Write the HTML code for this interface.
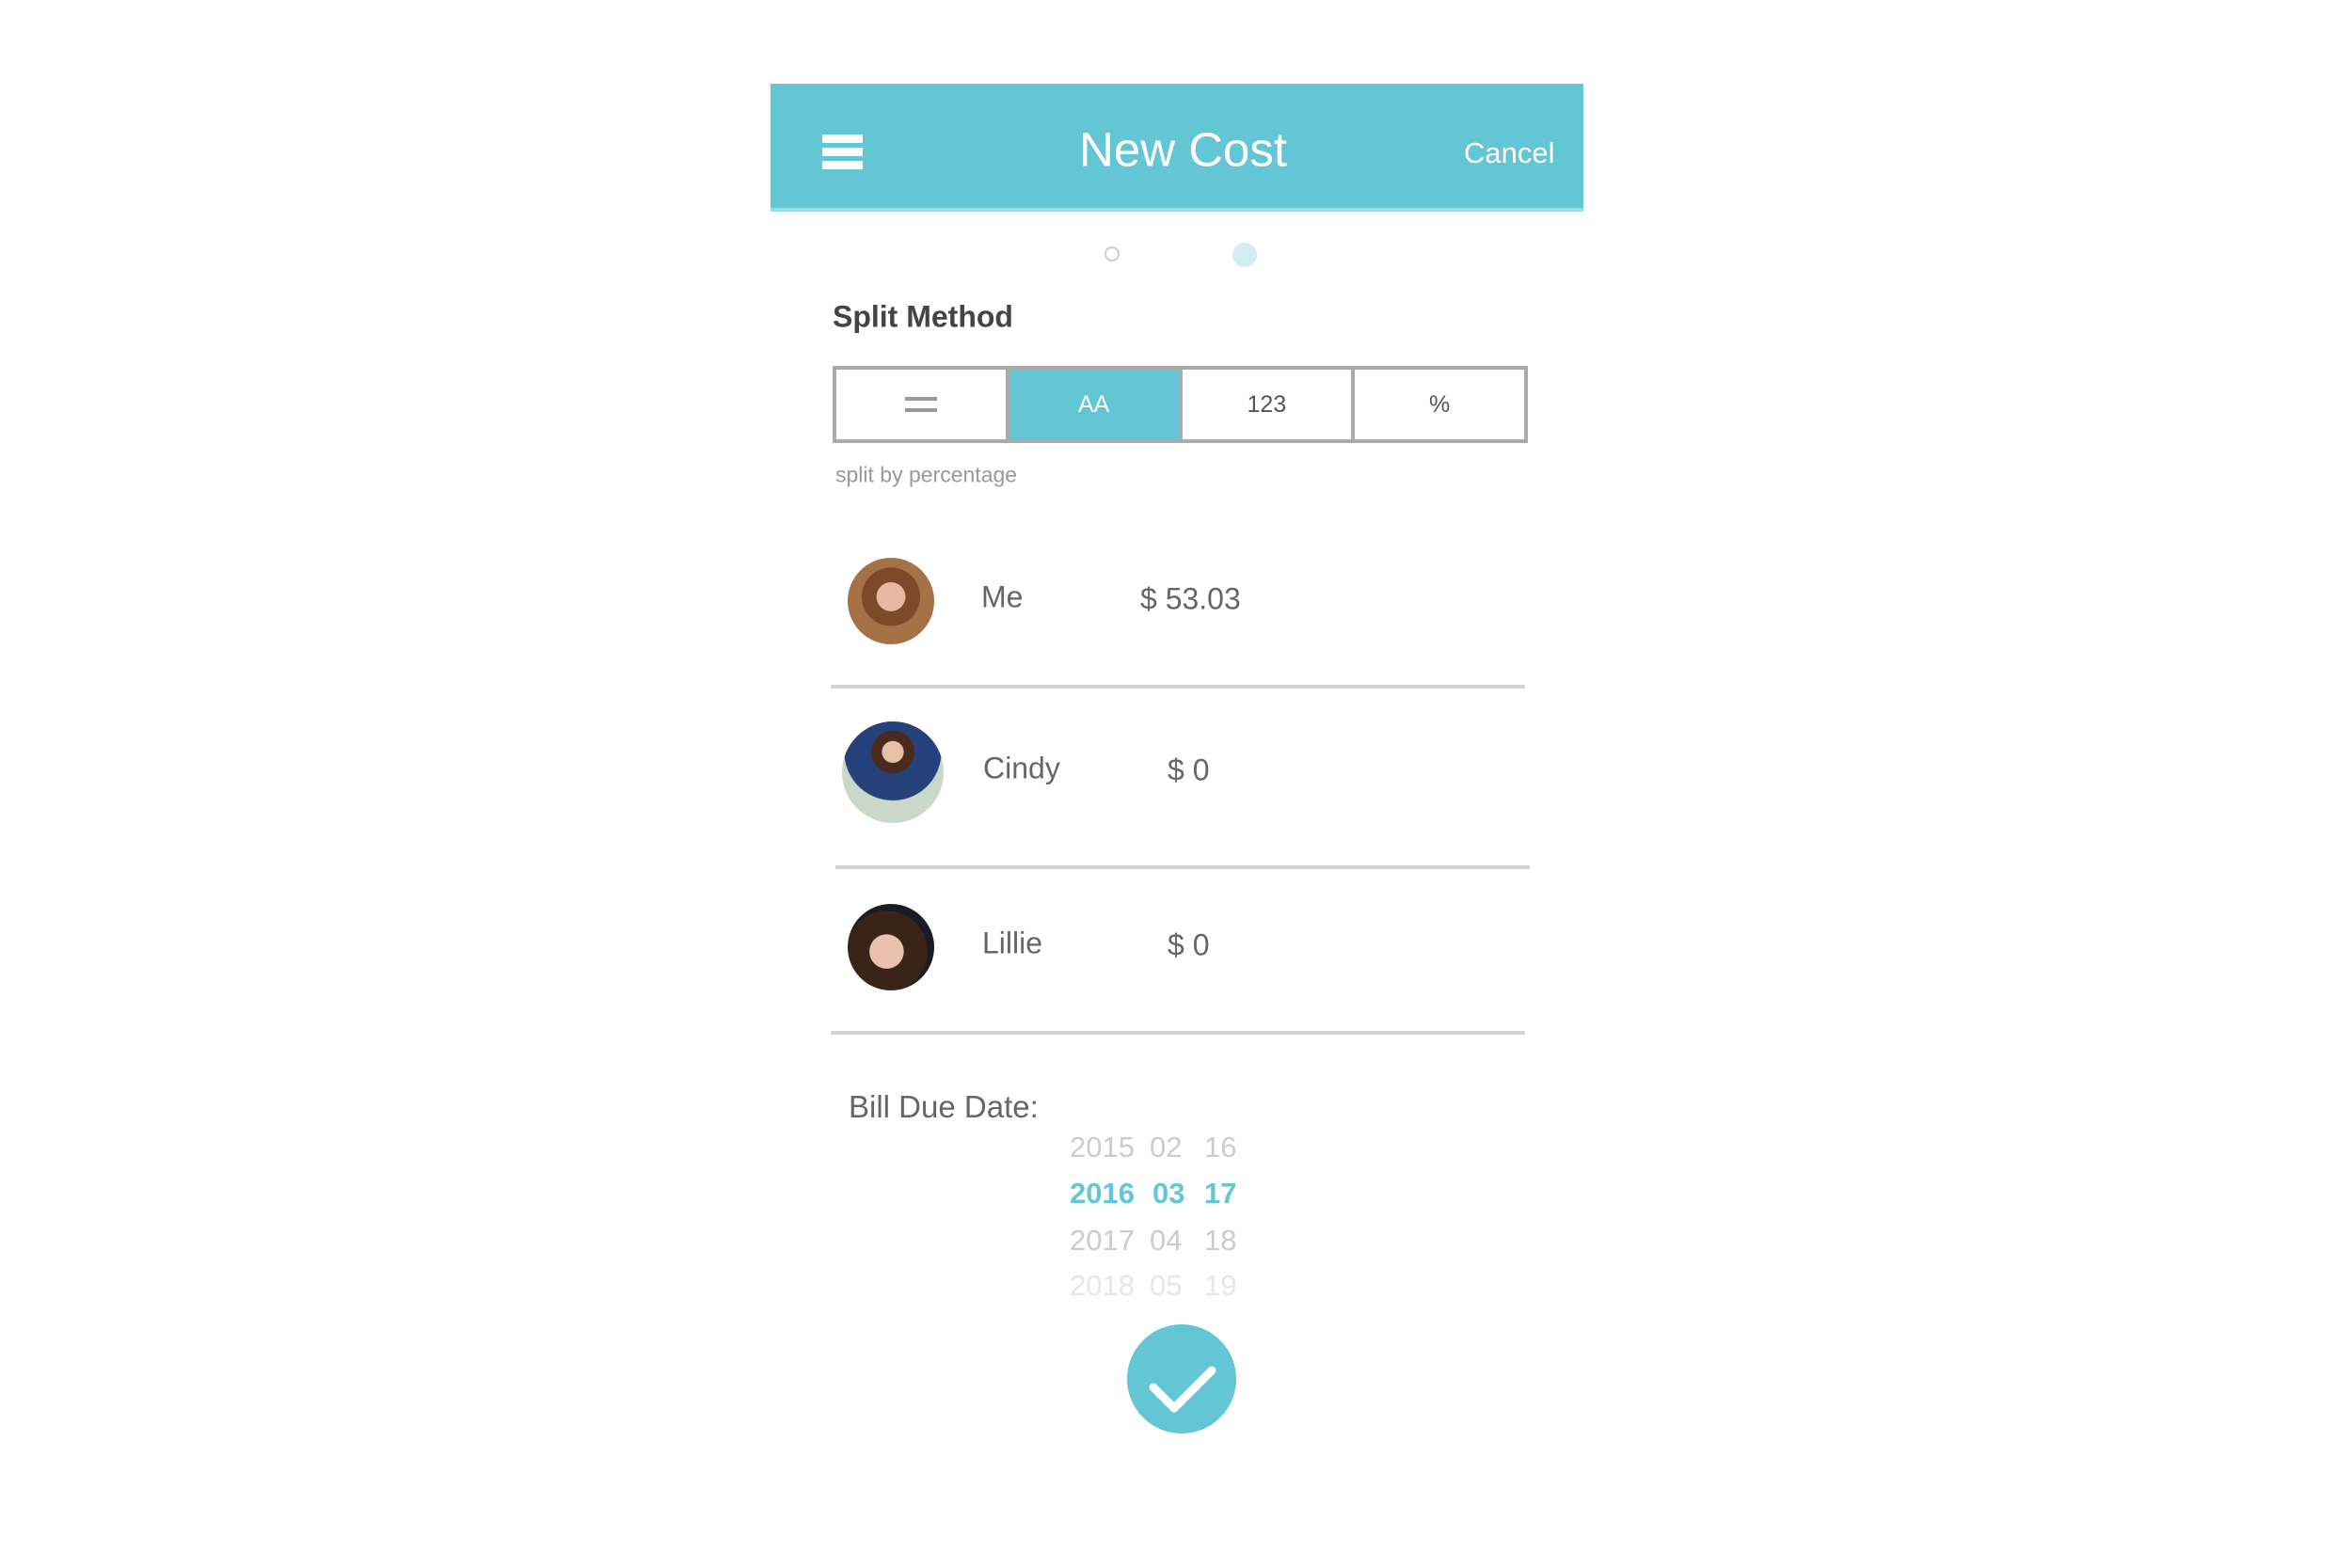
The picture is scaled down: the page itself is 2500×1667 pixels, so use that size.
<!DOCTYPE html>
<html><head><meta charset="utf-8"><style>
body{margin:0;width:2500px;height:1667px;background:#fff;position:relative;overflow:hidden;font-family:"Liberation Sans",sans-serif;}
#w{position:absolute;left:0;top:0;width:2500px;height:1667px;transform:translate(-3px,-1px);}
.a{position:absolute;white-space:nowrap;}
.c{position:absolute;transform:translateY(-50%);white-space:nowrap;}
.hdr{left:822px;top:90px;width:864px;height:136px;background:#62c6d4;border-bottom:4px solid #9adbe6;box-sizing:border-box;}
.bar{position:absolute;left:877px;width:43px;height:9px;background:#fff;}
.seg{left:888px;top:390px;width:739px;height:82px;border:4px solid #aaa;box-sizing:border-box;display:flex;}
.seg div{flex:1;display:flex;align-items:center;justify-content:center;font-size:25px;color:#555;border-right:4px solid #aaa;}
.seg div:last-child{border-right:none;}
.line{position:absolute;height:4px;background:#d2d2d2;}
.name{font-size:32px;color:#666;}
.d{font-size:31px;color:#ccc;}
</style></head><body><div id="w">
<div class="a hdr"></div>
<div class="bar" style="top:144px"></div><div class="bar" style="top:158px"></div><div class="bar" style="top:172px"></div>
<div class="c" style="left:1150px;top:160px;font-size:51px;color:#fff;">New Cost</div>
<div class="c" style="left:1559px;top:164px;font-size:31px;color:#fff;">Cancel</div>
<div class="a" style="left:1177px;top:263px;width:16px;height:16px;border:2px solid #ccc;border-radius:50%;box-sizing:border-box;"></div>
<div class="a" style="left:1313px;top:259px;width:26px;height:26px;background:#d3eef3;border-radius:50%;"></div>
<div class="c" style="left:888px;top:338px;font-size:32px;font-weight:bold;color:#444;">Split Method</div>
<div class="a seg"><div><span style="display:block;width:34px;height:16px;border-top:4px solid #999;border-bottom:4px solid #999;box-sizing:border-box;"></span></div><div style="background:#62c6d4;color:#fff;">AA</div><div>123</div><div>%</div></div>
<div class="c" style="left:891px;top:506px;font-size:23px;color:#999;">split by percentage</div>

<div class="a" style="left:904px;top:594px;width:92px;height:92px;border-radius:50%;background:radial-gradient(circle at 50% 45%,#e8b9a0 0 22%,#7a4a2a 23% 45%,#a57248 46%);"></div>
<div class="c name" style="left:1046px;top:636px;">Me</div>
<div class="c name" style="left:1215px;top:638px;">$ 53.03</div>
<div class="line" style="left:886px;top:729px;width:738px;"></div>

<div class="a" style="left:898px;top:768px;width:108px;height:108px;border-radius:50%;background:radial-gradient(circle at 50% 30%,#e7c0a8 0 12%,#4a2a1e 13% 24%,#24417a 25% 55%,#c9d8c8 56%);"></div>
<div class="c name" style="left:1048px;top:818px;">Cindy</div>
<div class="c name" style="left:1244px;top:820px;">$ 0</div>
<div class="line" style="left:891px;top:921px;width:738px;"></div>

<div class="a" style="left:904px;top:962px;width:92px;height:92px;border-radius:50%;background:radial-gradient(circle at 45% 55%,#eac1ad 0 25%,#3a2418 26% 60%,#1b1b22 61%);"></div>
<div class="c name" style="left:1047px;top:1004px;">Lillie</div>
<div class="c name" style="left:1244px;top:1006px;">$ 0</div>
<div class="line" style="left:886px;top:1097px;width:738px;"></div>

<div class="c" style="left:905px;top:1178px;font-size:33px;color:#666;">Bill Due Date:</div>
<div class="c d" style="left:1140px;top:1221px;">2015</div><div class="c d" style="left:1225px;top:1221px;">02</div><div class="c d" style="left:1283px;top:1221px;">16</div>
<div class="c d" style="left:1140px;top:1270px;color:#62c6d4;font-weight:bold;">2016</div><div class="c d" style="left:1228px;top:1270px;color:#62c6d4;font-weight:bold;">03</div><div class="c d" style="left:1283px;top:1270px;color:#62c6d4;font-weight:bold;">17</div>
<div class="c d" style="left:1140px;top:1320px;">2017</div><div class="c d" style="left:1225px;top:1320px;">04</div><div class="c d" style="left:1283px;top:1320px;">18</div>
<div class="c d" style="left:1140px;top:1368px;color:#e6e6e6;">2018</div><div class="c d" style="left:1225px;top:1368px;color:#e6e6e6;">05</div><div class="c d" style="left:1283px;top:1368px;color:#e6e6e6;">19</div>

<svg class="a" style="left:1201px;top:1409px" width="116" height="116" viewBox="0 0 116 116"><circle cx="58" cy="58" r="58" fill="#62c6d4"/><path d="M28 67 L50 89 L90 49" fill="none" stroke="#fff" stroke-width="9" stroke-linecap="round" stroke-linejoin="round"/></svg>
</div></body></html>
